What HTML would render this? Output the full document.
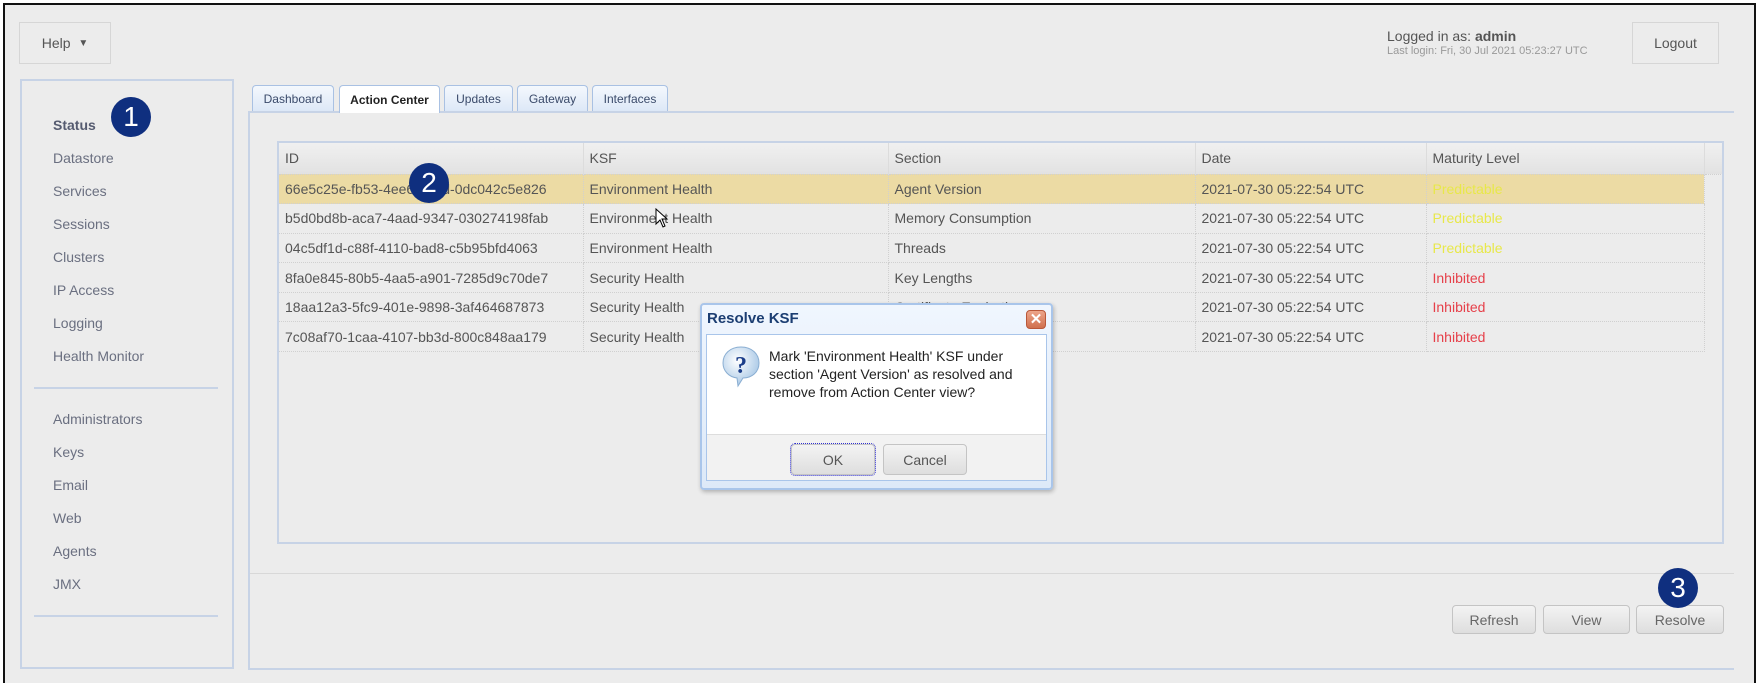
<!DOCTYPE html>
<html><head><meta charset="utf-8"><style>
*{box-sizing:border-box;margin:0;padding:0}
body{width:1759px;height:672px;background:#fff;position:relative;overflow:hidden;font-family:"Liberation Sans",Arial,sans-serif;color:#555}
.a{position:absolute}
#frame{left:3px;top:3px;width:1753px;height:680px;border:2px solid #111;border-bottom:none;background:#ececec}
.btn{position:absolute;border:1px solid #d6d6d6;background:#ececec;font-size:14px;color:#555;display:flex;align-items:center;justify-content:center}
.gbtn{position:absolute;border:1px solid #c4c4c4;border-radius:4px;background:linear-gradient(#f3f3f3,#dedede);font-size:14px;color:#666;display:flex;align-items:center;justify-content:center}
.nav{position:absolute;left:53px;font-size:14px;color:#6a6f80}
.sep{position:absolute;left:34px;width:184px;height:2px;background:#c7d3e6}
.tab{position:absolute;top:85px;height:26px;border:1px solid #a9c1e3;border-bottom:none;border-radius:4px 4px 0 0;background:linear-gradient(#f4f8fd,#dde8f7);font-size:12px;color:#3a4a6a;display:flex;align-items:center;justify-content:center}
.circ{position:absolute;width:40px;height:40px;border-radius:50%;background:#0f2f7f;color:#fff;font-size:28px;display:flex;align-items:center;justify-content:center}
table{border-collapse:collapse;font-size:14px;color:#555}
td,th{height:29.6px;padding:0 6px;text-align:left;font-weight:normal;border-right:1px dotted #d0d0d0;border-bottom:1px dotted #d0d0d0;white-space:nowrap}
th{background:linear-gradient(#f0f0f0,#e2e2e2);height:31px;border-right:1px solid #dcdcdc}
.sel td{background:#ecdba4}
.y{color:#e8e84a}.r{color:#e6404a}
</style></head><body>
<div id="frame" class="a"></div>
<div class="btn" style="left:19px;top:22px;width:92px;height:42px">Help&nbsp;&nbsp;<span style="font-size:10px">▼</span></div>
<div class="a" style="left:1387px;top:28px;font-size:14px;color:#555">Logged in as: <b>admin</b></div>
<div class="a" style="left:1387px;top:45px;font-size:11px;color:#999">Last login: Fri, 30 Jul 2021 05:23:27 UTC</div>
<div class="btn" style="left:1632px;top:22px;width:87px;height:42px">Logout</div>

<div class="a" style="left:20px;top:79px;width:214px;height:590px;border:2px solid #c7d3e6"></div>
<div class="nav" style="top:117px;font-weight:bold;color:#555b70">Status</div>
<div class="nav" style="top:150px">Datastore</div>
<div class="nav" style="top:183px">Services</div>
<div class="nav" style="top:216px">Sessions</div>
<div class="nav" style="top:249px">Clusters</div>
<div class="nav" style="top:282px">IP Access</div>
<div class="nav" style="top:315px">Logging</div>
<div class="nav" style="top:348px">Health Monitor</div>
<div class="sep" style="top:387px"></div>
<div class="nav" style="top:411px">Administrators</div>
<div class="nav" style="top:444px">Keys</div>
<div class="nav" style="top:477px">Email</div>
<div class="nav" style="top:510px">Web</div>
<div class="nav" style="top:543px">Agents</div>
<div class="nav" style="top:576px">JMX</div>
<div class="sep" style="top:615px"></div>
<div class="circ" style="left:111px;top:97px">1</div>

<div class="a" style="left:248px;top:111px;width:1486px;height:559px;border:2px solid #c7d3e6;border-right:none"></div>
<div class="a" style="left:250px;top:573px;width:1484px;height:1px;background:#d8d8d8"></div>
<div class="tab" style="left:252px;width:82px">Dashboard</div>
<div class="tab" style="left:339px;width:101px;background:#fff;height:28px;color:#222;font-weight:bold">Action Center</div>
<div class="tab" style="left:444px;width:69px">Updates</div>
<div class="tab" style="left:517px;width:71px">Gateway</div>
<div class="tab" style="left:592px;width:76px">Interfaces</div>

<div class="a" style="left:277px;top:141px;width:1447px;height:403px;border:2px solid #c7d3e6;background:#ececec;overflow:hidden">
<table style="width:1445px">
<tr><th style="width:304px">ID</th><th style="width:305px">KSF</th><th style="width:307px">Section</th><th style="width:231px">Date</th><th style="width:278px">Maturity Level</th><th></th></tr>
<tr class="sel"><td>66e5c25e-fb53-4ee6-a81d-0dc042c5e826</td><td>Environment Health</td><td>Agent Version</td><td>2021-07-30 05:22:54 UTC</td><td class="y">Predictable</td><td style="background:#ececec;border:none"></td></tr>
<tr><td>b5d0bd8b-aca7-4aad-9347-030274198fab</td><td>Environment Health</td><td>Memory Consumption</td><td>2021-07-30 05:22:54 UTC</td><td class="y">Predictable</td><td style="border:none"></td></tr>
<tr><td>04c5df1d-c88f-4110-bad8-c5b95bfd4063</td><td>Environment Health</td><td>Threads</td><td>2021-07-30 05:22:54 UTC</td><td class="y">Predictable</td><td style="border:none"></td></tr>
<tr><td>8fa0e845-80b5-4aa5-a901-7285d9c70de7</td><td>Security Health</td><td>Key Lengths</td><td>2021-07-30 05:22:54 UTC</td><td class="r">Inhibited</td><td style="border:none"></td></tr>
<tr><td>18aa12a3-5fc9-401e-9898-3af464687873</td><td>Security Health</td><td>Certificate Expirations</td><td>2021-07-30 05:22:54 UTC</td><td class="r">Inhibited</td><td style="border:none"></td></tr>
<tr><td>7c08af70-1caa-4107-bb3d-800c848aa179</td><td>Security Health</td><td>Certificates</td><td>2021-07-30 05:22:54 UTC</td><td class="r">Inhibited</td><td style="border:none"></td></tr>
</table></div>
<div class="circ" style="left:409px;top:163px">2</div>
<svg class="a" style="left:655px;top:208px" width="14" height="20" viewBox="0 0 14 20"><path d="M1 1 L1 16 L5 12 L8 19 L10 18 L7 11 L12 11 Z" fill="#fff" stroke="#000" stroke-width="1"/></svg>

<div class="gbtn" style="left:1452px;top:605px;width:84px;height:29px">Refresh</div>
<div class="gbtn" style="left:1543px;top:605px;width:87px;height:29px">View</div>
<div class="gbtn" style="left:1636px;top:605px;width:88px;height:29px">Resolve</div>
<div class="circ" style="left:1658px;top:568px">3</div>

<div class="a" style="left:700px;top:303px;width:353px;height:187px;border:2px solid #a9c5ea;border-radius:4px;background:linear-gradient(#f0f6fe,#dde9f8);box-shadow:1px 2px 4px rgba(0,0,0,.25)"></div>
<div class="a" style="left:707px;top:310px;font-size:15px;font-weight:bold;color:#1c3e72">Resolve KSF</div>
<div class="a" style="left:1026px;top:310px;width:20px;height:19px;border-radius:4px;background:linear-gradient(#eda58a,#d0704e);border:1px solid #b9583a;color:#fff;font-size:15px;font-weight:bold;display:flex;align-items:center;justify-content:center;line-height:1">✕</div>
<div class="a" style="left:706px;top:334px;width:341px;height:147px;border:1px solid #a9c5ea;background:#f2f2f2"></div>
<div class="a" style="left:707px;top:335px;width:339px;height:100px;background:#fff;border-bottom:1px solid #ddd"></div>
<svg class="a" style="left:720px;top:344px" width="42" height="44" viewBox="0 0 42 44"><defs><radialGradient id="g" cx="40%" cy="35%" r="65%"><stop offset="0" stop-color="#fff"/><stop offset="1" stop-color="#a9c8e6"/></radialGradient></defs><path d="M21 3 C32 3 39 10 39 19 C39 28 32 34 23 34 L18 42 L17 34 C9 33 3 27 3 19 C3 10 10 3 21 3Z" fill="url(#g)" stroke="#8aaed2"/><text x="21" y="29" text-anchor="middle" font-family="Liberation Serif,serif" font-weight="bold" font-size="24" fill="#1b3e8a">?</text></svg>
<div class="a" style="left:769px;top:347px;font-size:14px;line-height:18px;color:#222">Mark 'Environment Health' KSF under<br>section 'Agent Version' as resolved and<br>remove from Action Center view?</div>
<div class="gbtn" style="left:791px;top:444px;width:84px;height:31px;outline:1px dotted #3030d0;color:#555">OK</div>
<div class="gbtn" style="left:883px;top:444px;width:84px;height:31px;color:#555">Cancel</div>
</body></html>
